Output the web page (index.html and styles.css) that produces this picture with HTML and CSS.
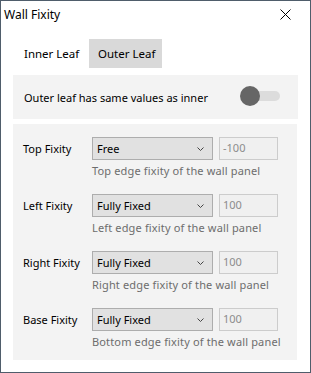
FILE: index.html
```html
<!DOCTYPE html>
<html lang="en">
  <head>
    <meta charset="UTF-8" />
    <title>Wall Fixity</title>
    <link rel="stylesheet" href="styles.css">
  </head>
  <body>
    <div class="dialog">
      <div class="title-bar">
        <span class="title">Wall Fixity</span>
        <svg class="close" width="11" height="11" viewBox="0 0 11 11">
          <path d="M0.5 0.5 L10.5 10.5 M10.5 0.5 L0.5 10.5" stroke="#000" stroke-width="1" fill="none" />
        </svg>
      </div>

      <div class="tabs">
        <div class="tab inner">Inner Leaf</div>
        <div class="tab outer active">Outer Leaf</div>
      </div>

      <div class="panel same-panel">
        <span>Outer leaf has same values as inner</span>
        <div class="toggle"><span class="knob"></span></div>
      </div>

      <div class="panel fixity-panel">
        <div class="fixity-row">
          <div class="fixity-label">Top Fixity</div>
          <div class="select">Free<svg class="chevron" width="7" height="4" viewBox="0 0 7 4"><path d="M0.5 0.5 L3.5 3.5 L6.5 0.5" stroke="#444" fill="none" /></svg></div>
          <div class="value">-100</div>
          <div class="hint">Top edge fixity of the wall panel</div>
        </div>
        <div class="fixity-row">
          <div class="fixity-label">Left Fixity</div>
          <div class="select">Fully Fixed<svg class="chevron" width="7" height="4" viewBox="0 0 7 4"><path d="M0.5 0.5 L3.5 3.5 L6.5 0.5" stroke="#444" fill="none" /></svg></div>
          <div class="value">100</div>
          <div class="hint">Left edge fixity of the wall panel</div>
        </div>
        <div class="fixity-row">
          <div class="fixity-label">Right Fixity</div>
          <div class="select">Fully Fixed<svg class="chevron" width="7" height="4" viewBox="0 0 7 4"><path d="M0.5 0.5 L3.5 3.5 L6.5 0.5" stroke="#444" fill="none" /></svg></div>
          <div class="value">100</div>
          <div class="hint">Right edge fixity of the wall panel</div>
        </div>
        <div class="fixity-row">
          <div class="fixity-label">Base Fixity</div>
          <div class="select">Fully Fixed<svg class="chevron" width="7" height="4" viewBox="0 0 7 4"><path d="M0.5 0.5 L3.5 3.5 L6.5 0.5" stroke="#444" fill="none" /></svg></div>
          <div class="value">100</div>
          <div class="hint">Bottom edge fixity of the wall panel</div>
        </div>
      </div>
    </div>
  </body>
</html>
```

FILE: styles.css
```css
body {
  margin: 0;
  font-family: "Noto Sans", sans-serif;
  font-size: 11px;
  color: #000;
}

.dialog {
  box-sizing: border-box;
  width: 311px;
  height: 373px;
  border: 1px solid #4f5d6b;
  background: white;
  padding: 0 12px 0 12px;
  overflow: hidden;
}

.title-bar {
  height: 30px;
  display: flex;
  align-items: center;
  justify-content: space-between;
  margin: 0 -1px 0 -9px;
}

.title {
  font-size: 12px;
  margin-top: -4px;
}

.close {
  margin-right: 8px;
  margin-top: -4px;
}

.tabs {
  display: flex;
  margin: 8px 0 7px 2px;
}

.tab {
  box-sizing: border-box;
  height: 29px;
  line-height: 29px;
  padding-left: 9px;
  font-size: 11.5px;
}

.tab.inner {
  width: 74px;
}

.tab.outer {
  width: 73px;
}

.tab.active {
  background: #d9d9d9;
}

.panel {
  background: #f3f3f3;
}

.same-panel {
  height: 44px;
  display: flex;
  align-items: center;
  justify-content: space-between;
  padding: 0 18px 0 11px;
}

.toggle {
  position: relative;
  width: 30px;
  height: 10px;
  border-radius: 5px;
  background: #dcdcdc;
  margin-top: -2px;
}

.knob {
  position: absolute;
  left: -10px;
  top: -5px;
  width: 20px;
  height: 20px;
  border-radius: 50%;
  background: #666;
}

.fixity-panel {
  margin-top: 5px;
  margin-right: 1px;
  padding: 13px 0 10px 10px;
  display: flex;
  flex-direction: column;
  gap: 15px;
}

.fixity-row {
  display: grid;
  grid-template-columns: 63px 121px 59px;
  column-gap: 6px;
  row-gap: 3px;
  align-items: center;
}

.fixity-label {
  height: 23px;
  line-height: 23px;
  margin-top: -1px;
}

.select {
  box-sizing: border-box;
  height: 23px;
  border: 1px solid #adadad;
  background: #e1e1e1;
  padding: 0 8px 0 4px;
  display: flex;
  align-items: center;
  justify-content: space-between;
}

.value {
  box-sizing: border-box;
  height: 23px;
  border: 1px solid #cccccc;
  background: #f0f0f0;
  color: #8c8c8c;
  padding: 0 3px;
  line-height: 20px;
}

.hint {
  grid-column: 2 / 4;
  color: #6d6d6d;
  line-height: 16px;
  letter-spacing: 0.15px;
  white-space: nowrap;
}
```
